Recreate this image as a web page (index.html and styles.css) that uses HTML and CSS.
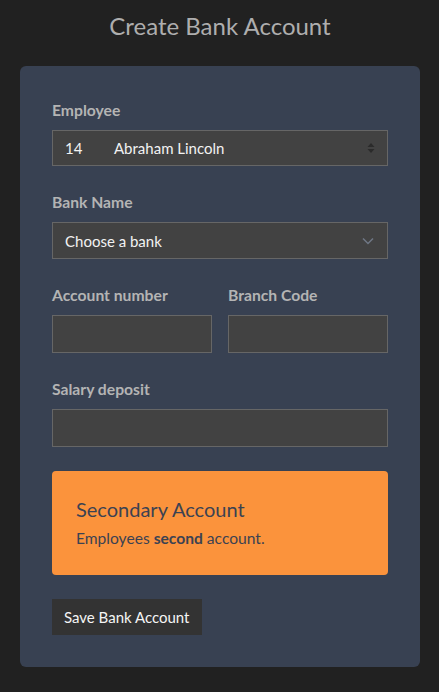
FILE: index.html
```html
<!DOCTYPE html>
<html>
<head>
<meta charset="utf-8">
<link rel="stylesheet" href="styles.css">
</head>
<body>
<h1 class="title">Create Bank Account</h1>
<form class="card">
  <div class="field">
    <label class="label">Employee</label>
    <div class="control select">
      <span class="emp-id">14</span><span class="emp-name">Abraham Lincoln</span>
      <svg class="sort" width="8" height="12" viewBox="0 0 8 12"><path d="M4 1L7.5 5H0.5Z M4 11L7.5 7H0.5Z" fill="#2b2b2b"/></svg>
    </div>
  </div>
  <div class="field">
    <label class="label">Bank Name</label>
    <div class="control select select-bank">
      <span>Choose a bank</span>
      <svg class="chev" width="12" height="8" viewBox="0 0 12 8"><path d="M1 1.5L6 6.5L11 1.5" fill="none" stroke="#6f7785" stroke-width="1.5"/></svg>
    </div>
  </div>
  <div class="row">
    <div class="field">
      <label class="label">Account number</label>
      <div class="control input"></div>
    </div>
    <div class="field">
      <label class="label">Branch Code</label>
      <div class="control input"></div>
    </div>
  </div>
  <div class="field">
    <label class="label">Salary deposit</label>
    <div class="control input"></div>
  </div>
  <div class="notice">
    <h2 class="notice-title">Secondary Account</h2>
    <p class="notice-text">Employees <strong>second</strong> account.</p>
  </div>
  <div class="actions">
    <button type="button" class="btn">Save Bank Account</button>
  </div>
</form>
</body>
</html>
```
FILE: styles.css
```css
* { box-sizing: border-box; }
html, body { margin: 0; padding: 0; }
body {
  background: #212121;
  font-family: Lato, "Open Sans", sans-serif;
  padding: 0 19px 25px 20px;
}
.title {
  margin: 0;
  padding-top: 10px;
  height: 66px;
  text-align: center;
  font-weight: 400;
  font-size: 24px;
  line-height: 32px;
  color: #aeaeae;
}
.card {
  background: #384152;
  border-radius: 6px;
  padding: 32px 32px 32px;
  display: flex;
  flex-direction: column;
}
.field { display: flex; flex-direction: column; margin-bottom: 24px; }
.label {
  font-size: 15.7px;
  font-weight: 700;
  line-height: 24px;
  color: #b4b4b4;
  margin-bottom: 8px;
}
.control {
  background: #424242;
  border: 1px solid #666;
  height: 36px;
  display: flex;
  align-items: center;
  padding: 0 12px;
  color: #f2f2f2;
  font-size: 15px;
}
.select { position: relative; }
.select-bank { height: 37px; }
.input { height: 38px; }
.emp-id { width: 49px; }
.sort { position: absolute; right: 12px; top: 11px; }
.chev { position: absolute; right: 13px; top: 14px; }
.row { display: grid; grid-template-columns: 1fr 1fr; gap: 16px; }
.notice {
  background: #fb933c;
  border-radius: 4px;
  padding: 24px 24px 26px;
  color: #3b4252;
}
.notice-title {
  margin: 0 0 4px;
  font-size: 20px;
  font-weight: 400;
  line-height: 28px;
}
.notice-text { margin: 0; font-size: 15.6px; line-height: 22px; }
.notice-text strong { font-weight: 700; }
.actions { margin-top: 24px; }
.btn {
  background: #333;
  border: none;
  color: #f5f5f5;
  font-family: Lato, sans-serif;
  font-size: 15px;
  height: 36px;
  padding: 0 12px;
}
```
